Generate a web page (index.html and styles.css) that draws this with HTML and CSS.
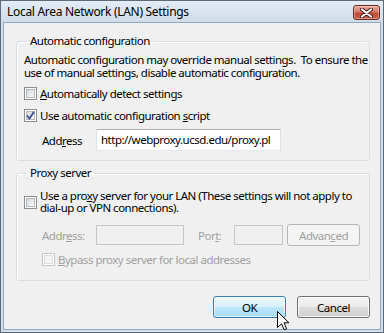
FILE: index.html
```html
<!DOCTYPE html>
<html>
<head>
<meta charset="utf-8">
<link rel="stylesheet" href="styles.css">
</head>
<body>
<div class="window">
  <div class="titlebar">
    <span class="title">Local Area Network (LAN) Settings</span>
    <span class="close">
      <svg width="13" height="10" viewBox="0 0 13 10"><path d="M2 1.5 L11 8.5 M11 1.5 L2 8.5" stroke="#4a1a14" stroke-width="4" stroke-linecap="round"/><path d="M2 1.5 L11 8.5 M11 1.5 L2 8.5" stroke="#fff" stroke-width="2.2" stroke-linecap="round"/></svg>
    </span>
  </div>
  <div class="client">
    <fieldset class="group g1">
      <legend>Automatic configuration</legend>
      <p class="desc">Automatic configuration may override manual settings.&nbsp; To ensure the<br>use of manual settings, disable automatic configuration.</p>
      <div class="check"><span class="box"></span><span class="lbl"><u>A</u>utomatically detect settings</span></div>
      <div class="check c2"><span class="box checked"><svg width="9" height="9" viewBox="0 0 9 9"><path d="M1 4.5 L3.5 7.5 L8 0.8" fill="none" stroke="#3b4f8c" stroke-width="1.8"/></svg></span><span class="lbl">Use automatic configuration <u>s</u>cript</span></div>
      <div class="addr-row"><span class="addr-lbl">Add<u>r</u>ess</span><span class="input">http://webproxy.ucsd.edu/proxy.pl</span></div>
    </fieldset>
    <fieldset class="group g2">
      <legend>Proxy server</legend>
      <div class="check multi"><span class="box"></span><span class="lbl">Use a pro<u>x</u>y server for your LAN (These settings will not apply to<br>dial-up or VPN connections).</span></div>
      <div class="proxy-row disabled">
        <span class="p-lbl">Addr<u>e</u>ss:</span>
        <span class="input dis addr"></span>
        <span class="p-lbl port">Por<u>t</u>:</span>
        <span class="input dis portin"></span>
        <span class="btn dis">Advan<u>c</u>ed</span>
      </div>
      <div class="check bypass disabled"><span class="box dis"></span><span class="lbl"><u>B</u>ypass proxy server for local addresses</span></div>
    </fieldset>
    <div class="buttons">
      <span class="btn ok">OK</span>
      <span class="btn">Cancel</span>
    </div>
  </div>
  <svg class="cursor" width="13" height="20" viewBox="0 0 13 20"><path d="M0.5 0.5 L0.5 16.5 L4.5 12.8 L7.2 18.8 L9.6 17.8 L7 11.8 L12 11.8 Z" fill="#fff" stroke="#000" stroke-width="1" stroke-linejoin="miter"/></svg>
</div>
</body>
</html>
```

FILE: styles.css
```css
* { box-sizing: border-box; }
html, body { margin: 0; padding: 0; }
body {
  width: 384px;
  height: 333px;
  overflow: hidden;
  font-family: "Noto Sans", "Open Sans", sans-serif;
  font-size: 11.5px;
  letter-spacing: -0.5px;
  color: #000;
  background: #fff;
}
u { text-decoration: underline; text-underline-offset: 1px; }

.window {
  width: 384px;
  height: 333px;
  border: 1px solid #5d6b78;
  background: #d3dfeb;
  display: flex;
  flex-direction: column;
  position: relative;
}

.titlebar {
  height: 21px;
  flex: none;
  display: flex;
  align-items: center;
  justify-content: space-between;
  padding: 0 3px 0 6px;
  background: linear-gradient(#e4ecf5, #d0dcea);
}
.title {
  font-size: 12px;
  letter-spacing: -0.3px;
  line-height: 15px;
  color: #000;
  white-space: nowrap;
}
.close {
  width: 27px;
  height: 15px;
  margin-top: 2px;
  border: 1px solid #6b2a22;
  border-radius: 3px;
  background: linear-gradient(#e8a89c 0%, #d77a6c 45%, #c04a38 55%, #c9604c 100%);
  box-shadow: inset 0 0 0 1px rgba(255,255,255,0.35);
  display: flex;
  align-items: center;
  justify-content: center;
}

.client {
  flex: 1;
  margin: 0 2px 2px;
  border: 1px solid #90a8c0;
  background: #f0f0f0;
  padding: 10px 10px 0 12px;
  display: flex;
  flex-direction: column;
  white-space: nowrap;
}

.group {
  margin: 0;
  padding: 3px 7px 9px 7px;
  min-width: 0;
  border: 1px solid #d5dfe5;
  border-radius: 3px;
  box-shadow: inset 1px 1px 0 #fff;
}
.group legend {
  padding: 0 3px 2px 3px;
  margin-left: 3px;
  line-height: 15px;
}
.g2 {
  margin-top: 4px;
  padding: 8px 7px 14px 7px;
}

.desc {
  margin: 0;
  line-height: 13px;
}

.check {
  display: flex;
  align-items: center;
  line-height: 13px;
  margin-top: 8px;
}
.check.c2 { margin-top: 9px; }
.check.multi { margin-top: 0; line-height: 12px; }
.check.bypass { margin-top: 7px; margin-left: 18px; }
.box {
  width: 13px;
  height: 13px;
  flex: none;
  border: 1px solid #8e8f8f;
  background: #fff;
  margin-right: 3px;
  position: relative;
  display: flex;
  align-items: center;
  justify-content: center;
}
.box::before {
  content: "";
  position: absolute;
  inset: 1px;
  border: 1px solid #b4b8be;
  background: linear-gradient(135deg, #d6d9de, #f8f8f8);
}
.box svg { position: relative; }
.box.dis { border-color: #c6c6c6; }
.box.dis::before { border-color: #dedede; background: #f4f4f4; }

.addr-row {
  display: flex;
  align-items: center;
  margin-top: 7px;
  padding-left: 18px;
}
.addr-lbl { width: 54px; }
.input {
  display: block;
  height: 22px;
  width: 185px;
  border: 1px solid;
  border-color: #abadb3 #dbdfe6 #e3e9ef #e2e3ea;
  background: #fff;
  padding-left: 4px;
  line-height: 20px;
  white-space: nowrap;
  overflow: hidden;
}

.disabled { color: #a0a0a0; }
.proxy-row {
  display: flex;
  align-items: center;
  margin-top: 10px;
  padding-left: 18px;
  height: 22px;
}
.p-lbl { width: 54px; }
.p-lbl.port { width: 36px; margin-left: 14px; }
.input.dis {
  height: 20px;
  background: #f0f0f0;
  border: 1px solid #c6c6c6;
}
.input.addr { width: 88px; }
.input.portin { width: 49px; }

.btn {
  display: flex;
  align-items: center;
  justify-content: center;
  width: 73px;
  height: 22px;
  border: 1px solid #707070;
  border-radius: 3px;
  background: linear-gradient(#f3f3f3 0%, #ebebeb 49%, #dddddd 51%, #cfcfcf 100%);
  box-shadow: inset 0 0 0 1px rgba(255,255,255,0.8);
}
.btn.dis {
  margin-left: 4px;
  border-color: #b5b5b5;
  background: #f4f4f4;
  color: #a0a0a0;
  box-shadow: none;
}
.buttons {
  display: flex;
  justify-content: flex-end;
  gap: 11px;
  margin-top: 15px;
}
.btn.ok {
  border-color: #3c7fb1;
  background: linear-gradient(#eaf6fd 0%, #d9f0fc 49%, #bee6fd 51%, #a7d9f5 100%);
  box-shadow: inset 0 0 0 1px rgba(255,255,255,0.6);
}

.cursor {
  position: absolute;
  left: 276px;
  top: 310px;
}
```
